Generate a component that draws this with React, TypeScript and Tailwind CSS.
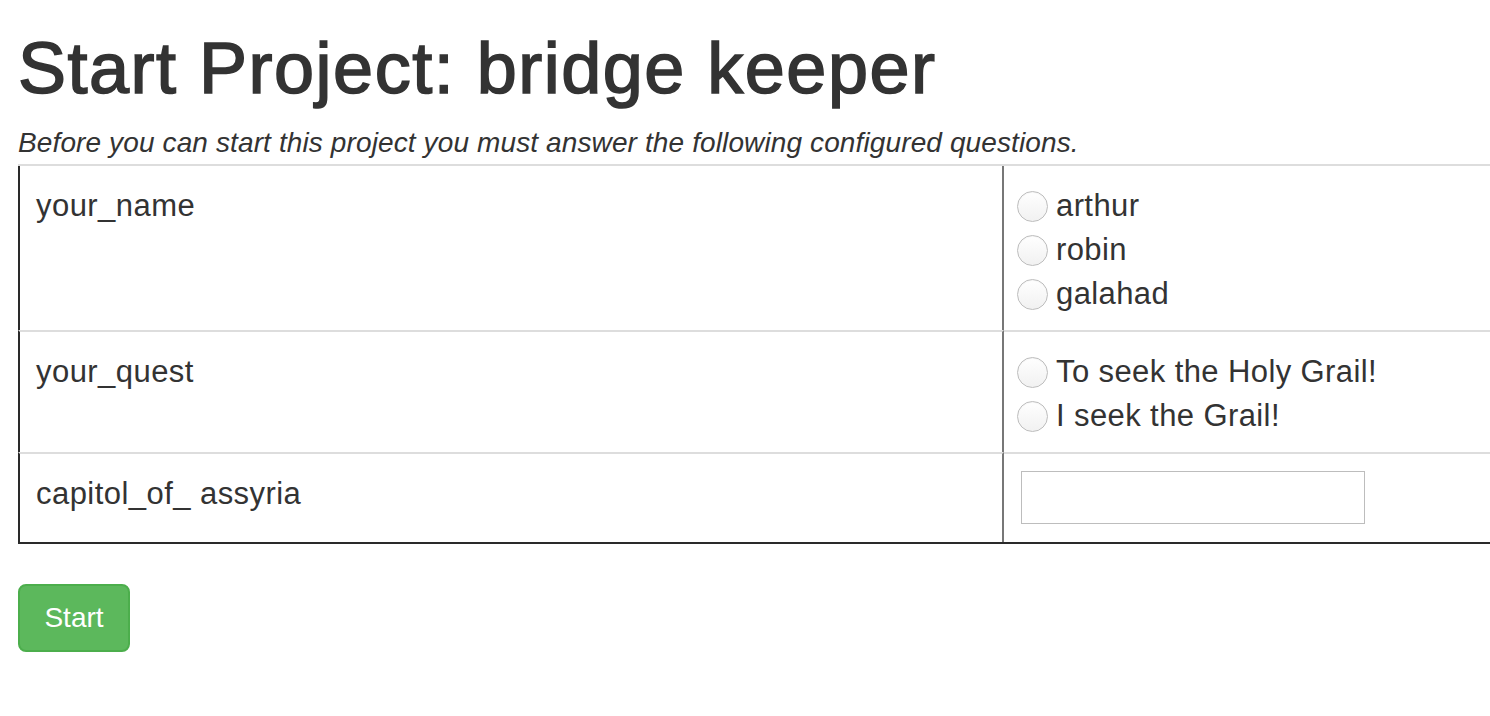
import React from "react";

const font = { fontFamily: '"Liberation Sans", Arial, Helvetica, sans-serif' };

function Radio({ label }: { label: string }) {
  return (
    <div className="flex items-center h-[44px]">
      <span className="inline-block w-[31px] h-[31px] rounded-full border border-[#bdbdbd] bg-gradient-to-b from-white to-[#f1f1f1] shadow-[inset_0_1px_1px_rgba(0,0,0,0.04)] shrink-0" />
      <span className="ml-[8px] text-[31px] tracking-[0.4px] leading-[44px] text-[#333] whitespace-nowrap">{label}</span>
    </div>
  );
}

export default function App() {
  return (
    <div className="w-[1490px] h-[716px] overflow-hidden bg-white text-[#333]" style={font}>
      <div className="pl-[18px] pt-[29px]">
        <h1 className="text-[72px] leading-[79px] h-[79px] font-normal tracking-[1.5px] [-webkit-text-stroke:1.6px_#333] whitespace-nowrap">
          Start Project: bridge keeper
        </h1>
        <p className="mt-[15px] text-[28px] leading-[40px] italic tracking-[0.12px] whitespace-nowrap">
          Before you can start this project you must answer the following configured questions.
        </p>
        <div className="mt-[1px] w-[1700px] border-t-2 border-t-[#dddddd] border-b-2 border-b-[#2a2a2a]">
          <div className="grid grid-cols-[986px_1fr]">
            {/* row 1 */}
            <div className="border-l-2 border-l-[#2a2a2a] border-r-2 border-r-[#777] pl-[16px] pt-[18px] pb-[14px] text-[31px] tracking-[0.45px] leading-[44px]">
              your_name
            </div>
            <div className="pl-[13px] pt-[18px] pb-[14px]">
              <Radio label="arthur" />
              <Radio label="robin" />
              <Radio label="galahad" />
            </div>
            {/* row 2 */}
            <div className="border-t-2 border-t-[#dddddd] border-l-2 border-l-[#2a2a2a] border-r-2 border-r-[#777] pl-[16px] pt-[18px] pb-[14px] text-[31px] tracking-[0.45px] leading-[44px]">
              your_quest
            </div>
            <div className="border-t-2 border-t-[#dddddd] pl-[13px] pt-[18px] pb-[14px]">
              <Radio label="To seek the Holy Grail!" />
              <Radio label="I seek the Grail!" />
            </div>
            {/* row 3 */}
            <div className="border-t-2 border-t-[#dddddd] border-l-2 border-l-[#2a2a2a] border-r-2 border-r-[#777] pl-[16px] pt-[18px] pb-[14px] text-[31px] tracking-[0.45px] leading-[44px] h-[90px]">
              capitol_of_ assyria
            </div>
            <div className="border-t-2 border-t-[#dddddd] pl-[17px] pt-[17px] h-[90px]">
              <input
                type="text"
                className="block w-[344px] h-[53px] border border-[#bdbdbd] bg-white outline-none"
              />
            </div>
          </div>
        </div>
        <button className="mt-[40px] w-[112px] h-[68px] rounded-[8px] bg-[#5cb85c] border-2 border-[#4cae4c] text-white text-[28px] leading-[40px]">
          Start
        </button>
      </div>
    </div>
  );
}
